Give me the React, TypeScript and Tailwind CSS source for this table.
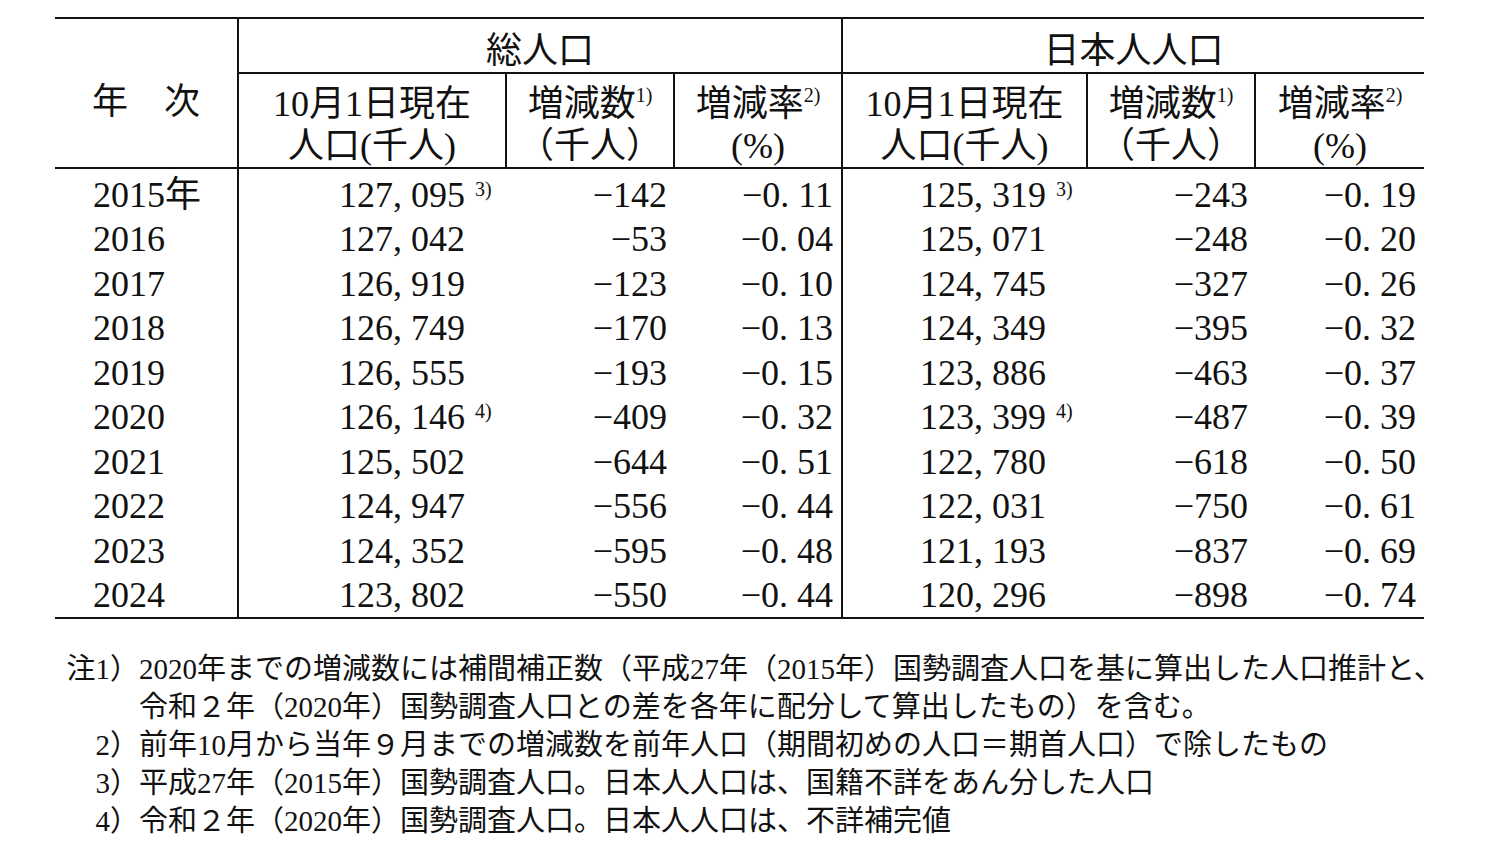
import React from 'react';

type Row = {
  year: string;
  total: string;
  totalNote?: string;
  totalDiff: string;
  totalRate: string;
  jp: string;
  jpNote?: string;
  jpDiff: string;
  jpRate: string;
};

const rows: Row[] = [
  { year: '2015年', total: '127,095', totalNote: '3)', totalDiff: '−142', totalRate: '−0.11', jp: '125,319', jpNote: '3)', jpDiff: '−243', jpRate: '−0.19' },
  { year: '2016', total: '127,042', totalDiff: '−53', totalRate: '−0.04', jp: '125,071', jpDiff: '−248', jpRate: '−0.20' },
  { year: '2017', total: '126,919', totalDiff: '−123', totalRate: '−0.10', jp: '124,745', jpDiff: '−327', jpRate: '−0.26' },
  { year: '2018', total: '126,749', totalDiff: '−170', totalRate: '−0.13', jp: '124,349', jpDiff: '−395', jpRate: '−0.32' },
  { year: '2019', total: '126,555', totalDiff: '−193', totalRate: '−0.15', jp: '123,886', jpDiff: '−463', jpRate: '−0.37' },
  { year: '2020', total: '126,146', totalNote: '4)', totalDiff: '−409', totalRate: '−0.32', jp: '123,399', jpNote: '4)', jpDiff: '−487', jpRate: '−0.39' },
  { year: '2021', total: '125,502', totalDiff: '−644', totalRate: '−0.51', jp: '122,780', jpDiff: '−618', jpRate: '−0.50' },
  { year: '2022', total: '124,947', totalDiff: '−556', totalRate: '−0.44', jp: '122,031', jpDiff: '−750', jpRate: '−0.61' },
  { year: '2023', total: '124,352', totalDiff: '−595', totalRate: '−0.48', jp: '121,193', jpDiff: '−837', jpRate: '−0.69' },
  { year: '2024', total: '123,802', totalDiff: '−550', totalRate: '−0.44', jp: '120,296', jpDiff: '−898', jpRate: '−0.74' },
];

// 明朝体の半角カンマ・ピリオドのような空きを付ける
const Num = ({ value }: { value: string }) => {
  const m = value.match(/^(.*[,.])(\d+)$/);
  if (!m) return <>{value}</>;
  return (
    <>
      <span className="mr-[9px]">{m[1]}</span>
      {m[2]}
    </>
  );
};

const PopValue = ({ value, note }: { value: string; note?: string }) => (
  <div className="flex justify-end">
    <span>
      <Num value={value} />
    </span>
    <span className="w-[41px] shrink-0 pl-[10px] pt-[2px] text-left text-[20px] leading-none">{note}</span>
  </div>
);

const Sup = ({ children }: { children: React.ReactNode }) => (
  <span className="text-[20px] leading-none align-[14px]">{children}</span>
);

export default function App() {
  const line = 'border-[#111]';
  return (
    <div className="w-[1485px] h-[845px] overflow-hidden bg-white text-[#111] font-['Liberation_Serif','Noto_Sans_CJK_JP',serif]">
      <table className="ml-[55px] mt-[17px] w-[1369px] table-fixed border-collapse text-[36px]">
        <colgroup>
          <col className="w-[183px]" />
          <col className="w-[268px]" />
          <col className="w-[168px]" />
          <col className="w-[168px]" />
          <col className="w-[245px]" />
          <col className="w-[168px]" />
          <col className="w-[169px]" />
        </colgroup>
        <thead>
          <tr className="h-[55px]">
            <th rowSpan={2} className={`border-t-2 border-b-2 border-r-2 ${line} pt-[18px] font-normal leading-none`}>
              年　次
            </th>
            <th colSpan={3} className={`border-t-2 border-b-2 border-r-2 ${line} pt-[10px] font-normal leading-none`}>
              総人口
            </th>
            <th colSpan={3} className={`border-t-2 border-b-2 ${line} pt-[10px] font-normal leading-none`}>
              日本人人口
            </th>
          </tr>
          <tr className="h-[95px]">
            <th className={`border-b-2 border-r-2 ${line} pt-[8px] font-normal leading-[42px]`}>
              10月1日現在
              <br />
              人口(千人)
            </th>
            <th className={`border-b-2 border-r-2 ${line} pt-[8px] font-normal leading-[42px]`}>
              増減数<Sup>1)</Sup>
              <br />
              （千人）
            </th>
            <th className={`border-b-2 border-r-2 ${line} pt-[8px] font-normal leading-[42px]`}>
              増減率<Sup>2)</Sup>
              <br />
              (%)
            </th>
            <th className={`border-b-2 border-r-2 ${line} pt-[8px] font-normal leading-[42px]`}>
              10月1日現在
              <br />
              人口(千人)
            </th>
            <th className={`border-b-2 border-r-2 ${line} pt-[8px] font-normal leading-[42px]`}>
              増減数<Sup>1)</Sup>
              <br />
              （千人）
            </th>
            <th className={`border-b-2 ${line} pt-[8px] font-normal leading-[42px]`}>
              増減率<Sup>2)</Sup>
              <br />
              (%)
            </th>
          </tr>
        </thead>
        <tbody>
          {rows.map((r, i) => {
            const last = i === rows.length - 1;
            const bottom = last ? `border-b-2 ${line}` : '';
            return (
              <tr key={r.year} className={`${last ? 'h-[48.5px]' : 'h-[44.5px]'} align-top leading-[36px]`}>
                <td className={`border-r-2 ${line} ${bottom} pt-[8px] pl-[38px] text-left`}>{r.year}</td>
                <td className={`${bottom} pt-[8px]`}>
                  <PopValue value={r.total} note={r.totalNote} />
                </td>
                <td className={`${bottom} pt-[8px] pr-[7px] text-right`}>{r.totalDiff}</td>
                <td className={`border-r-2 ${line} ${bottom} pt-[8px] pr-[8px] text-right`}>
                  <Num value={r.totalRate} />
                </td>
                <td className={`${bottom} pt-[8px]`}>
                  <PopValue value={r.jp} note={r.jpNote} />
                </td>
                <td className={`${bottom} pt-[8px] pr-[7px] text-right`}>{r.jpDiff}</td>
                <td className={`${bottom} pt-[8px] pr-[8px] text-right`}>
                  <Num value={r.jpRate} />
                </td>
              </tr>
            );
          })}
        </tbody>
      </table>

      <div className="mt-[31px] whitespace-nowrap text-[29px] leading-[38px]">
        <div className="flex">
          <span className="w-[139px] shrink-0 text-right">注1）</span>
          <span>2020年までの増減数には補間補正数（平成27年（2015年）国勢調査人口を基に算出した人口推計と、</span>
        </div>
        <div className="pl-[139px]">令和２年（2020年）国勢調査人口との差を各年に配分して算出したもの）を含む。</div>
        <div className="flex">
          <span className="w-[139px] shrink-0 text-right">2）</span>
          <span>前年10月から当年９月までの増減数を前年人口（期間初めの人口＝期首人口）で除したもの</span>
        </div>
        <div className="flex">
          <span className="w-[139px] shrink-0 text-right">3）</span>
          <span>平成27年（2015年）国勢調査人口。日本人人口は、国籍不詳をあん分した人口</span>
        </div>
        <div className="flex">
          <span className="w-[139px] shrink-0 text-right">4）</span>
          <span>令和２年（2020年）国勢調査人口。日本人人口は、不詳補完値</span>
        </div>
      </div>
    </div>
  );
}
